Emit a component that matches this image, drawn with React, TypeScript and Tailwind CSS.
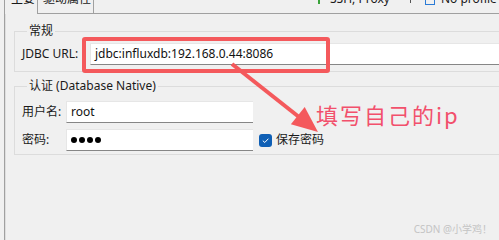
const font = { fontFamily: '"Noto Sans", "Noto Sans CJK SC", sans-serif' };

const Field = ({ children, className = "" }: { children?: React.ReactNode; className?: string }) => (
  <div className={`flex h-[22px] items-center border-b border-[#868686] border-t border-t-[#e6e6e6] border-l border-l-[#e6e6e6] bg-white pl-[4px] text-[12px] text-[#111] ${className}`}>
    {children}
  </div>
);

export default function App() {
  return (
    <div
      className="relative flex h-[240px] w-[499px] flex-col overflow-hidden bg-[#f0f0f0] text-[12px] text-[#1a1a1a]"
      style={font}
    >
      {/* Tabs row (cut off at the top) */}
      <div className="flex h-[14px] shrink-0 overflow-hidden">
        <div className="ml-[4px] w-[33px] border-l border-[#a0a0a0] pl-[6px]">
          <div className="-mt-[9px] leading-[16px]">主要</div>
        </div>
        <div className="w-[57px] border-x border-b border-[#a0a0a0] pl-[5px]">
          <div className="-mt-[9px] leading-[16px]">驱动属性</div>
        </div>
        <div className="flex flex-1 items-start border-b border-[#a0a0a0]">
          <div className="ml-[224px] h-[4px] w-[2px] bg-[#3aa33a]" />
          <div className="-mt-[9px] ml-[10px] leading-[16px]">SSH, Proxy</div>
          <div className="ml-[20px] h-[3px] w-[1px] bg-[#555]" />
          <div className="ml-[14px] h-[5px] w-[10px] border-x border-b border-[#2b7bd6]" />
          <div className="-mt-[9px] ml-[6px] whitespace-nowrap leading-[16px]">No profile</div>
        </div>
      </div>

      {/* Panel */}
      <div className="ml-[4px] flex flex-1 border-l border-[#a0a0a0]">
        <div className="flex flex-1 flex-col border-l border-[#dedede] pl-[8px] pt-[10px]">
          <fieldset className="w-[520px] border border-[#dcdcdc] px-[7px] pb-[6px] pt-[5px]">
            <legend className="ml-[5px] px-[2px] leading-[14px]">常规</legend>
            <div className="flex items-center">
              <span className="w-[68px]">JDBC URL:</span>
              <Field className="flex-1">jdbc:influxdb:192.168.0.44:8086</Field>
            </div>
          </fieldset>

          <fieldset className="mt-[7px] w-[520px] border border-[#dcdcdc] px-[7px] pb-[3px] pt-[8px]">
            <legend className="ml-[5px] px-[2px] leading-[14px]">认证 (Database Native)</legend>
            <div className="flex flex-col gap-[6px]">
              <div className="flex items-center">
                <span className="w-[44px]">用户名:</span>
                <Field className="w-[187px]">root</Field>
              </div>
              <div className="flex items-center">
                <span className="w-[44px]">密码:</span>
                <Field className="w-[187px] gap-[2px]">
                  <span className="h-[6px] w-[6px] rounded-full bg-black" />
                  <span className="h-[6px] w-[6px] rounded-full bg-black" />
                  <span className="h-[6px] w-[6px] rounded-full bg-black" />
                  <span className="h-[6px] w-[6px] rounded-full bg-black" />
                </Field>
                <div className="ml-[6px] flex h-[13px] w-[13px] items-center justify-center rounded-[3px] bg-[#0f5fb5]">
                  <svg viewBox="0 0 10 10" className="h-[9px] w-[9px]">
                    <path d="M2 5.2 L4.2 7.2 L8.2 3" fill="none" stroke="white" strokeWidth="1.1" />
                  </svg>
                </div>
                <span className="ml-[4px]">保存密码</span>
              </div>
            </div>
          </fieldset>
        </div>
      </div>

      {/* Annotations */}
      <div className="absolute left-[82px] top-[37px] h-[36px] w-[248px] rounded-[3px] border-[4px] border-[#f4595c]" />
      <svg className="absolute left-0 top-0 h-[240px] w-[499px]" viewBox="0 0 499 240">
        <line x1="232" y1="64" x2="299" y2="117" stroke="#f4595c" strokeWidth="4" />
        <polygon points="318,132 290.9,124.2 304.7,107" fill="#f4595c" />
      </svg>
      <div
        className="absolute left-[316px] top-[99px] text-[22px] leading-[30px] tracking-[2px] text-[#f2506c]"
        style={{ fontFamily: '"Noto Sans CJK SC", sans-serif' }}
      >
        填写自己的ip
      </div>
      <div className="absolute bottom-[3px] right-[7px] text-[10px] text-[#c4c4c4]">CSDN @小学鸡！</div>
    </div>
  );
}
